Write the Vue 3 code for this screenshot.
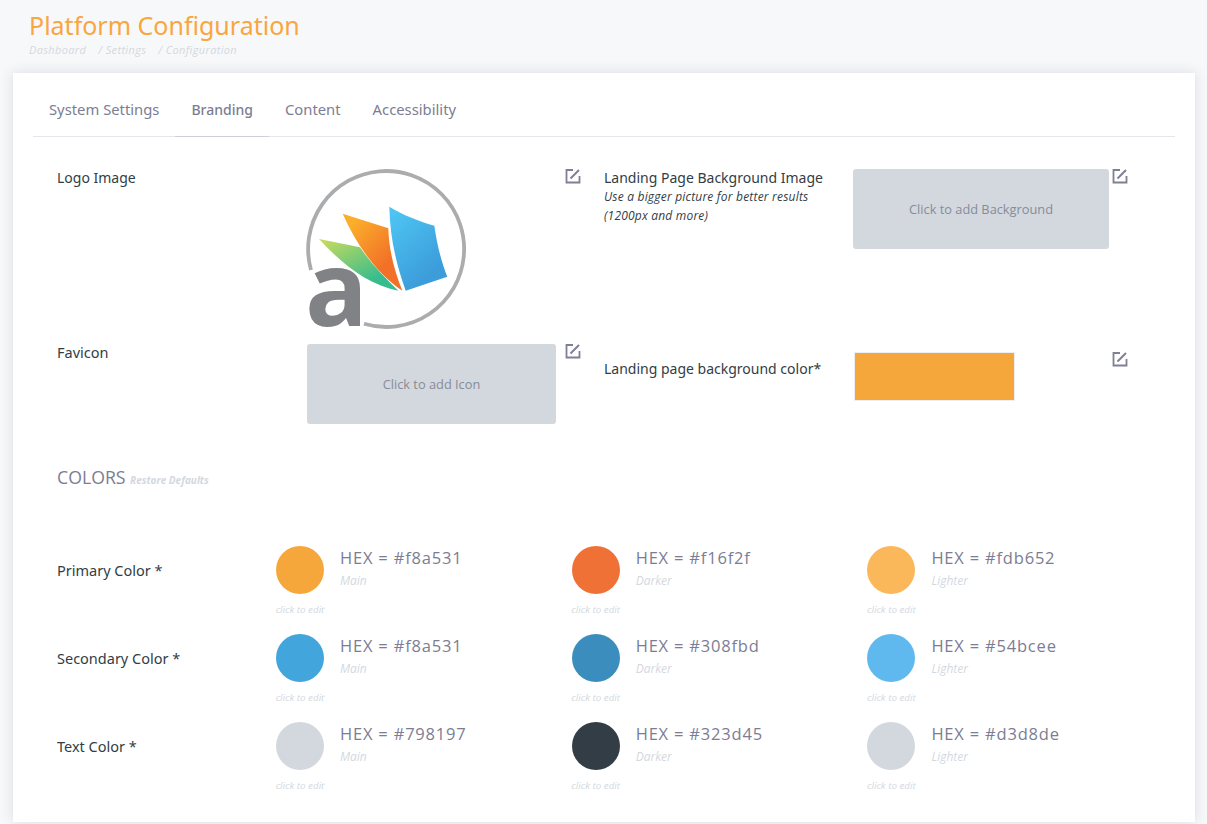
<template>
  <div class="page">
    <header class="page-head">
      <h1>Platform Configuration</h1>
      <div class="crumbs">
        <span>Dashboard</span>
        <span>/ Settings</span>
        <span>/ Configuration</span>
      </div>
    </header>

    <main class="card">
      <nav class="tabs">
        <a v-for="tab in tabs" :key="tab" :class="{ active: tab === 'Branding' }">{{ tab }}</a>
      </nav>

      <section class="branding">
        <div class="brand-row logo-row">
          <div class="label">Logo Image</div>
          <div class="value">
            <svg class="logo" viewBox="0 0 160 160" width="160" height="160">
              <defs>
                <linearGradient id="gBlue" x1="0.2" y1="0" x2="0.7" y2="0.8">
                  <stop offset="0" stop-color="#4dc4f3" />
                  <stop offset="1" stop-color="#3c9dda" />
                </linearGradient>
                <linearGradient id="gOrange" x1="0.2" y1="0.1" x2="0.7" y2="0.7">
                  <stop offset="0" stop-color="#fbad2b" />
                  <stop offset="1" stop-color="#f27027" />
                </linearGradient>
                <linearGradient id="gGreen" x1="0.1" y1="0" x2="0.7" y2="0.8">
                  <stop offset="0" stop-color="#c4da5e" />
                  <stop offset="1" stop-color="#36bc8e" />
                </linearGradient>
              </defs>
              <path d="M58 154.8A78 78 0 1 0 5 101" fill="none" stroke="#abacae" stroke-width="3.8" />
              <path d="M13 70L54 78.3C64 93 78 108 92.3 121.7C62 116 36 95 13 70Z" fill="url(#gGreen)" />
              <path d="M36.7 44.7L82.3 59.3C83 83 89 103 96.3 121.7C70 104 50 75 36.7 44.7Z" fill="url(#gOrange)" />
              <path d="M83.3 37.7C97 46 112 52 128.3 56.7C131 75 135 92 141.3 107.7L99.7 121.7C90 95 84 68 83.3 37.7Z" fill="url(#gBlue)" />
              <text class="logo-a" x="-1" y="157">a</text>
            </svg>
          </div>
          <svg class="edit" viewBox="0 0 16 16" width="16" height="16"><path d="M8 2H1.5V14.5H14.5V8" fill="none" stroke="#7f7f96" stroke-width="1.8" /><path d="M5.5 10.5L14 2" fill="none" stroke="#7f7f96" stroke-width="2" /></svg>
        </div>

        <div class="brand-row right-col logo-row">
          <div class="label">
            Landing Page Background Image
            <em>Use a bigger picture for better results (1200px and more)</em>
          </div>
          <div class="value">
            <div class="dropbox wide">Click to add Background</div>
          </div>
          <svg class="edit" viewBox="0 0 16 16" width="16" height="16"><path d="M8 2H1.5V14.5H14.5V8" fill="none" stroke="#7f7f96" stroke-width="1.8" /><path d="M5.5 10.5L14 2" fill="none" stroke="#7f7f96" stroke-width="2" /></svg>
        </div>

        <div class="brand-row">
          <div class="label favicon-label">Favicon</div>
          <div class="value">
            <div class="dropbox">Click to add Icon</div>
          </div>
          <svg class="edit" viewBox="0 0 16 16" width="16" height="16"><path d="M8 2H1.5V14.5H14.5V8" fill="none" stroke="#7f7f96" stroke-width="1.8" /><path d="M5.5 10.5L14 2" fill="none" stroke="#7f7f96" stroke-width="2" /></svg>
        </div>

        <div class="brand-row right-col swatch-row">
          <div class="label swatch-label">Landing page background color*</div>
          <div class="value">
            <div class="swatch"></div>
          </div>
          <svg class="edit" viewBox="0 0 16 16" width="16" height="16"><path d="M8 2H1.5V14.5H14.5V8" fill="none" stroke="#7f7f96" stroke-width="1.8" /><path d="M5.5 10.5L14 2" fill="none" stroke="#7f7f96" stroke-width="2" /></svg>
        </div>
      </section>

      <section class="colors">
        <h2>COLORS <small>Restore Defaults</small></h2>
        <div v-for="row in colorRows" :key="row.name" class="color-row">
          <div class="color-name">{{ row.name }} *</div>
          <div v-for="shade in row.shades" :key="shade.kind" class="shade">
            <div class="dot-wrap">
              <div class="dot" :style="{ background: shade.dot }"></div>
              <span class="hint">click to edit</span>
            </div>
            <div class="shade-text">
              <div class="hex">HEX = {{ shade.hex }}</div>
              <div class="kind">{{ shade.kind }}</div>
            </div>
          </div>
        </div>
      </section>
    </main>
  </div>
</template>

<script setup>
const tabs = ['System Settings', 'Branding', 'Content', 'Accessibility']

const colorRows = [
  {
    name: 'Primary Color',
    shades: [
      { kind: 'Main', hex: '#f8a531', dot: '#f6a73c' },
      { kind: 'Darker', hex: '#f16f2f', dot: '#f07136' },
      { kind: 'Lighter', hex: '#fdb652', dot: '#fbb85b' }
    ]
  },
  {
    name: 'Secondary Color',
    shades: [
      { kind: 'Main', hex: '#f8a531', dot: '#42a5dc' },
      { kind: 'Darker', hex: '#308fbd', dot: '#3b8dbe' },
      { kind: 'Lighter', hex: '#54bcee', dot: '#5fb9ee' }
    ]
  },
  {
    name: 'Text Color',
    shades: [
      { kind: 'Main', hex: '#798197', dot: '#d3d8de' },
      { kind: 'Darker', hex: '#323d45', dot: '#323d45' },
      { kind: 'Lighter', hex: '#d3d8de', dot: '#d3d8de' }
    ]
  }
]
</script>

<style>
html,
body {
  margin: 0;
  background: #f7f8fa;
}
</style>

<style scoped>
.page {
  height: 824px;
  overflow: hidden;
  box-sizing: border-box;
  padding: 0 12px 2px 13px;
  font-family: "Noto Sans", sans-serif;
}

.page-head {
  height: 73px;
  padding-left: 16px;
  box-sizing: border-box;
}

h1 {
  margin: 0;
  padding-top: 8px;
  font-size: 25px;
  line-height: 35px;
  font-weight: 400;
  color: #f9a63e;
}

.crumbs {
  display: flex;
  gap: 12px;
  font-family: "Open Sans", sans-serif;
  font-size: 11px;
  line-height: 14px;
  letter-spacing: 0.35px;
  font-style: italic;
  color: #d3d8de;
}

.card {
  height: 749px;
  box-sizing: border-box;
  background: #fff;
  padding: 0 20px;
  box-shadow: 0 0 12px rgba(50, 60, 80, 0.14);
}

.tabs {
  display: flex;
  border-bottom: 1px solid #e4e6ec;
  height: 63px;
}

.tabs a {
  padding: 0 16px;
  line-height: 73px;
  font-size: 14.8px;
  color: #7c7d94;
}

.tabs a.active {
  font-size: 14px;
  font-weight: 500;
  height: 63px;
  border-bottom: 1px solid #cfd1d8;
}

.branding {
  display: grid;
  grid-template-columns: 547px 1fr;
  grid-template-rows: 175px 100px;
  padding: 32px 0 0 24px;
}

.brand-row {
  display: flex;
  align-items: flex-start;
  position: relative;
}

.label {
  width: 250px;
  flex: none;
  font-size: 14px;
  line-height: 18px;
  color: #323d45;
}

.label em {
  display: block;
  width: 215px;
  font-family: "Open Sans", sans-serif;
  font-size: 12px;
  letter-spacing: 0.2px;
  line-height: 19px;
}

.favicon-label {
  margin-top: -1px;
  font-size: 14.5px;
}

.right-col .label {
  width: 249px;
}

.swatch-label {
  padding-top: 16px;
}

.value {
  width: 258px;
  flex: none;
}

.right-col .value {
  width: 259px;
}

.logo {
  display: block;
  margin-left: -1px;
  overflow: visible;
}

.dropbox {
  width: 249px;
  height: 80px;
  background: #d3d8de;
  border-radius: 3px;
  display: flex;
  align-items: center;
  justify-content: center;
  font-family: "Open Sans", sans-serif;
  font-size: 12.8px;
  color: #868c99;
}

.dropbox.wide {
  width: 256px;
}

.swatch {
  width: 159px;
  height: 47px;
  margin: 8px 0 0 1px;
  background: #f6a73c;
  border: 1px solid #eceef1;
}

.edit {
  flex: none;
  margin-top: -1px;
}

.swatch-row .edit {
  margin-top: 7px;
}

.colors {
  padding: 0 0 0 24px;
  margin-top: 21px;
}

h2 {
  margin: 0 0 54px;
  font-family: "Open Sans", sans-serif;
  font-size: 17.7px;
  line-height: 24px;
  font-weight: 400;
  color: #7c7d94;
}

h2 small {
  font-size: 10px;
  font-weight: 700;
  font-style: italic;
  color: #d3d8de;
}

.color-row {
  display: flex;
  align-items: flex-start;
  height: 88px;
}

.color-name {
  width: 219px;
  flex: none;
  padding-top: 15px;
  font-size: 14.5px;
  line-height: 18px;
  color: #323d45;
}

.shade {
  width: 295.7px;
  flex: none;
  display: flex;
  gap: 16px;
}

.dot-wrap {
  width: 48px;
  display: flex;
  flex-direction: column;
  align-items: center;
}

.dot {
  width: 48px;
  height: 48px;
  flex: none;
  border-radius: 50%;
}

.hint {
  margin-top: 10px;
  font-family: "Open Sans", sans-serif;
  font-size: 9.8px;
  line-height: 12px;
  font-style: italic;
  white-space: nowrap;
  color: #d3d8de;
}

.hex {
  font-family: "Open Sans", sans-serif;
  font-size: 16.5px;
  line-height: 24px;
  letter-spacing: 0.8px;
  color: #7c7d94;
}

.kind {
  margin-top: 1px;
  font-family: "Open Sans", sans-serif;
  font-size: 12px;
  line-height: 20px;
  font-style: italic;
  color: #d3d8de;
}

.logo-a {
  font-family: "Open Sans", sans-serif;
  font-size: 104px;
  font-weight: 700;
  fill: #808285;
}
</style>
